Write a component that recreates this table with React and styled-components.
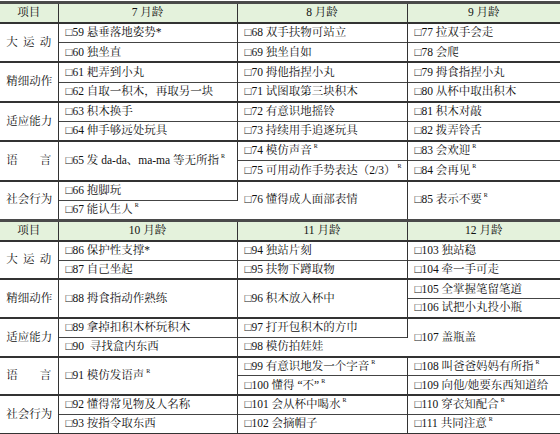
import styled, { createGlobalStyle } from 'styled-components';

const Global = createGlobalStyle`
body{
  margin:0;
  background:#fff;
  font-family:"Liberation Serif","Noto Serif CJK SC","Noto Sans CJK SC",serif;
  color:#111;
}
`

const Page = styled.div`
width:560px;
height:434px;
overflow:hidden;
background:#fff;
padding-top:1px;
`

const Table = styled.table`
width:560px;
table-layout:fixed;
border-collapse:collapse;
border-top:3px solid #4a4a4a;
border-bottom:${p => p.$last ? '2px solid #333' : '0'};
`

const HeadCell = styled.th`
height:18px;
padding:0;
background:#e4f2dc;
font-weight:normal;
font-size:11.5px;
line-height:1;
text-align:center;
border-bottom:1.5px solid #333;
border-right:1.5px solid #333;
&:last-child{border-right:none;}
`

const LabelCell = styled.td`
padding:0;
border-top:2px solid #333;
border-right:1.5px solid #333;
vertical-align:middle;
`

const Label = styled.div`
width:45px;
margin:0 auto;
display:flex;
justify-content:space-between;
font-size:11.5px;
line-height:1;
white-space:nowrap;
`

const ItemCell = styled.td`
height:${p => p.$h}px;
padding:0 0 0 7px;
font-size:11.5px;
line-height:1;
white-space:pre;
overflow:hidden;
border-top:${p => p.$top ? '2px solid #333' : '1px solid #444'};
border-right:1.5px solid #333;
vertical-align:middle;
&:last-child{border-right:none;}
`

const Mark = styled.span`
display:inline-block;
font-size:6px;
line-height:0;
vertical-align:top;
margin:1px 0 0 2px;
`

const Item = ({ it }) => (
  <>
    {'□' + it[0] + ' ' + it[1]}
    {it[2] === '*' && '*'}
    {it[2] === 'R' && <Mark>R</Mark>}
  </>
)

const labels = ['大运动', '精细动作', '适应能力', '语言', '社会行为']

const tables = [
  {
    months: ['7 月龄', '8 月龄', '9 月龄'],
    rows: [
      [
        [[59, '悬垂落地姿势', '*'], [60, '独坐直']],
        [[68, '双手扶物可站立'], [69, '独坐自如']],
        [[77, '拉双手会走'], [78, '会爬']],
      ],
      [
        [[61, '耙弄到小丸'], [62, '自取一积木，再取另一块']],
        [[70, '拇他指捏小丸'], [71, '试图取第三块积木']],
        [[79, '拇食指捏小丸'], [80, '从杯中取出积木']],
      ],
      [
        [[63, '积木换手'], [64, '伸手够远处玩具']],
        [[72, '有意识地摇铃'], [73, '持续用手追逐玩具']],
        [[81, '积木对敲'], [82, '拨弄铃舌']],
      ],
      [
        [[65, '发 da-da、ma-ma 等无所指', 'R']],
        [[74, '模仿声音', 'R'], [75, '可用动作手势表达（2/3）', 'R']],
        [[83, '会欢迎', 'R'], [84, '会再见', 'R']],
      ],
      [
        [[66, '抱脚玩'], [67, '能认生人', 'R']],
        [[76, '懂得成人面部表情']],
        [[85, '表示不要', 'R']],
      ],
    ],
  },
  {
    months: ['10 月龄', '11 月龄', '12 月龄'],
    rows: [
      [
        [[86, '保护性支撑', '*'], [87, '自己坐起']],
        [[94, '独站片刻'], [95, '扶物下蹲取物']],
        [[103, '独站稳'], [104, '牵一手可走']],
      ],
      [
        [[88, '拇食指动作熟练']],
        [[96, '积木放入杯中']],
        [[105, '全掌握笔留笔道'], [106, '试把小丸投小瓶']],
      ],
      [
        [[89, '拿掉扣积木杯玩积木'], [90, ' 寻找盒内东西']],
        [[97, '打开包积木的方巾'], [98, '模仿拍娃娃']],
        [[107, '盖瓶盖']],
      ],
      [
        [[91, '模仿发语声', 'R']],
        [[99, '有意识地发一个字音', 'R'], [100, '懂得 “不”', 'R']],
        [[108, '叫爸爸妈妈有所指', 'R'], [109, '向他/她要东西知道给']],
      ],
      [
        [[92, '懂得常见物及人名称'], [93, '按指令取东西']],
        [[101, '会从杯中喝水', 'R'], [102, '会摘帽子']],
        [[110, '穿衣知配合', 'R'], [111, '共同注意', 'R']],
      ],
    ],
  },
]

const Block = ({ data, last, h }) => (
  <Table $last={last}>
    <colgroup>
      <col style={{ width: 58 }} />
      <col style={{ width: 179 }} />
      <col style={{ width: 170 }} />
      <col />
    </colgroup>
    <thead>
      <tr>
        <HeadCell>项目</HeadCell>
        {data.months.map(m => <HeadCell key={m}>{m}</HeadCell>)}
      </tr>
    </thead>
    <tbody>
      {data.rows.map((cols, i) => [
        <tr key={i + 'a'}>
          <LabelCell rowSpan={2}>
            <Label>{[...labels[i]].map((c, k) => <span key={k}>{c}</span>)}</Label>
          </LabelCell>
          {cols.map((items, j) => (
            <ItemCell key={j} $top $h={h} rowSpan={items.length === 1 ? 2 : 1}>
              <Item it={items[0]} />
            </ItemCell>
          ))}
        </tr>,
        <tr key={i + 'b'}>
          {cols.filter(items => items.length > 1).map((items, j) => (
            <ItemCell key={j} $h={h}><Item it={items[1]} /></ItemCell>
          ))}
        </tr>,
      ])}
    </tbody>
  </Table>
)

const App = () => {
  return (
    <Page>
      <Global />
      <Block data={tables[0]} h={18.2} />
      <Block data={tables[1]} h={17.8} last />
    </Page>
  )
}

export default App
